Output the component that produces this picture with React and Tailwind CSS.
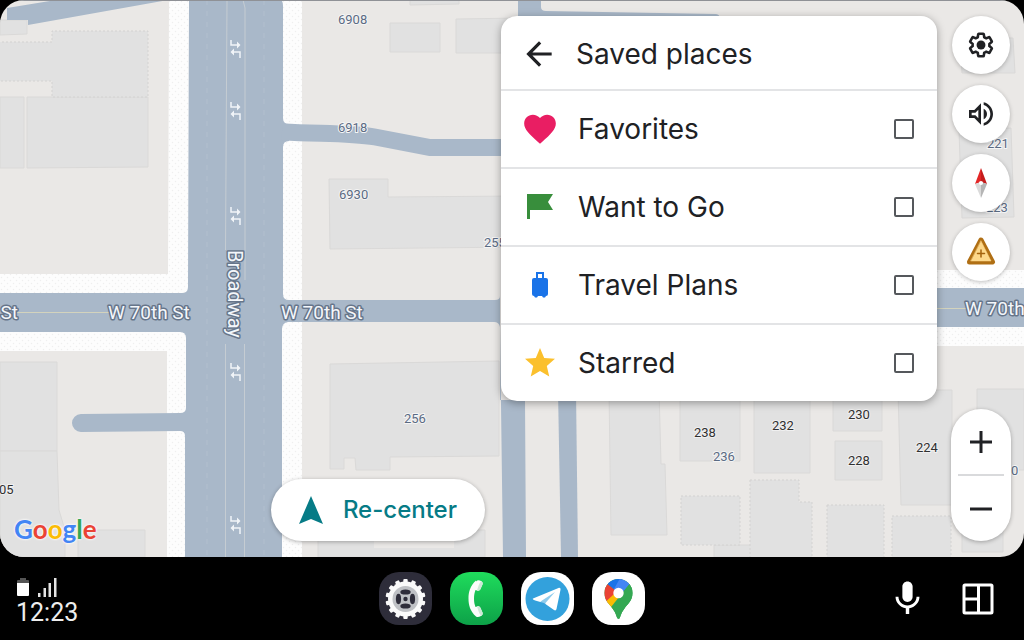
import { MdArrowBack, MdFavorite, MdMic, MdOutlineVolumeUp, MdStar } from 'react-icons/md';

const GEAR =
  'M19.14 12.94c.04-.3.06-.61.06-.94 0-.32-.02-.64-.07-.94l2.03-1.58c.18-.14.23-.41.12-.61l-1.92-3.32c-.12-.22-.37-.29-.59-.22l-2.39.96c-.5-.38-1.03-.7-1.62-.94l-.36-2.54c-.04-.24-.24-.41-.48-.41h-3.84c-.24 0-.43.17-.47.41l-.36 2.54c-.59.24-1.13.57-1.62.94l-2.39-.96c-.22-.08-.47 0-.59.22L2.74 8.87c-.12.21-.08.47.12.61l2.03 1.58c-.05.3-.09.63-.09.94s.02.64.07.94l-2.03 1.58c-.18.14-.23.41-.12.61l1.92 3.32c.12.22.37.29.59.22l2.39-.96c.5.38 1.03.7 1.62.94l.36 2.54c.05.24.24.41.48.41h3.84c.24 0 .44-.17.47-.41l.36-2.54c.59-.24 1.13-.56 1.62-.94l2.39.96c.22.08.47 0 .59-.22l1.92-3.32c.12-.22.07-.47-.12-.61z';

const BUILDINGS = [
  '0,20 27,20 27,34 0,35',
  '0,97 24,97 24,168 0,168',
  '27,97 148,97 148,167 27,168',
  '0,362 57,362 57,451 0,451',
  '0,451 57,451 59,510 65,530 65,557 0,557',
  '78,530 145,530 145,557 78,557',
  '410,0 459,0 459,4 410,5',
  '390,23 440,23 440,52 390,52',
  '456,19 520,18 520,53 456,53',
  '329,179 388,179 388,197 520,196 520,247 330,249',
  '330,364 499,361 499,456 390,457 390,470 356,470 355,458 344,458 344,469 330,469',
  '318,530 485,530 485,557 318,557',
  '609,390 659,390 661,464 665,464 667,535 611,535',
  '680,390 740,390 740,461 680,461',
  '754,390 810,390 810,473 754,473',
  '833,390 882,390 882,431 833,431',
  '835,441 882,441 882,480 835,480',
  '898,390 952,390 952,505 901,505',
  '977,389 1024,389 1024,470 977,470',
  '962,530 1003,530 1003,552 962,552',
  '714,545 762,545 762,557 714,557',
  '960,38 1013,38 1015,73 962,73',
  '959,130 1011,128 1014,217 962,218',
];

const DASHED_BUILDINGS = [
  '-2,42 52,42 52,31 148,31 148,97 52,97 52,81 -2,81',
  '681,496 740,496 740,545 681,545',
  '750,480 799,480 799,502 812,502 812,559 750,559',
  '827,505 884,505 884,559 827,559',
  '892,516 951,516 951,559 892,559',
];

const HOUSE_NUMBERS = [
  { text: '6908', x: 338, y: 24 },
  { text: '6918', x: 338, y: 132 },
  { text: '6930', x: 339, y: 199 },
  { text: '255', x: 484, y: 247 },
  { text: '256', x: 404, y: 423 },
  { text: '236', x: 713, y: 461 },
  { text: '221', x: 987, y: 148 },
  { text: '223', x: 986, y: 212 },
  { text: '0', x: 1011, y: 475 },
];

const PLACE_NUMBERS = [
  { text: '05', x: -1, y: 494 },
  { text: '238', x: 694, y: 437 },
  { text: '232', x: 772, y: 430 },
  { text: '230', x: 848, y: 419 },
  { text: '228', x: 848, y: 465 },
  { text: '224', x: 916, y: 452 },
];

const TURN_ARROWS = [49, 111, 216, 372, 525];

function FlagIcon() {
  return (
    <svg viewBox="0 0 32 32" className="size-8" fill="#388e3c">
      <path d="M3 3h26l-5 8 5 8H6v9H3z" />
    </svg>
  );
}

function LuggageIcon() {
  return (
    <svg viewBox="0 0 32 32" className="size-8" fill="#1a73e8">
      <path
        fillRule="evenodd"
        d="M12 3h8v6h2a2 2 0 0 1 2 2v14a2 2 0 0 1-2 2l-1 1.500h-2L18 27h-4l-1 1.500h-2L10 27a2 2 0 0 1-2-2V11a2 2 0 0 1 2-2h2zM14 5v4h4V5z"
      />
    </svg>
  );
}

const LISTS = [
  { id: 'favorites', label: 'Favorites', icon: <MdFavorite className="size-[38px] text-[#e91e63]" /> },
  { id: 'want-to-go', label: 'Want to Go', icon: <FlagIcon /> },
  { id: 'travel-plans', label: 'Travel Plans', icon: <LuggageIcon /> },
  { id: 'starred', label: 'Starred', icon: <MdStar className="size-9 text-[#fbc02d]" /> },
];

function MapCanvas() {
  return (
    <svg
      viewBox="0 0 1024 557"
      preserveAspectRatio="xMinYMin slice"
      className="absolute inset-0 size-full font-[Roboto,sans-serif]"
      aria-hidden="true"
    >
      <defs>
        <pattern id="sidewalk" width="6" height="6" patternUnits="userSpaceOnUse">
          <rect width="6" height="6" fill="#fdfdfd" />
          <circle cx="1.500" cy="1.500" r="0.700" fill="#efefef" />
          <circle cx="4.500" cy="4.500" r="0.700" fill="#efefef" />
        </pattern>
      </defs>
      <rect width="1024" height="557" fill="#eae8e6" />

      <g fill="#e1e1e1" stroke="#dad9d8" strokeWidth="1">
        {BUILDINGS.map((points) => (
          <polygon key={points} points={points} />
        ))}
      </g>
      <g fill="#e1e1e1" stroke="#d3d2d1" strokeWidth="1" strokeDasharray="2 2">
        {DASHED_BUILDINGS.map((points) => (
          <polygon key={points} points={points} />
        ))}
      </g>
      <rect x="374" y="530" width="80" height="18" fill="#eae8e6" />

      {/* Sidewalks */}
      <g fill="url(#sidewalk)">
        <path d="M169 0h24v340H0v-66h168z" />
        <path d="M0 320h190v237h-23V351H0z" />
        <path d="M278 0h24v557h-24z" />
        <path d="M930 270h94v76h-94z" />
      </g>

      {/* Streets */}
      <g fill="#a9b8c9">
        <path d="M7 8L56 0H168L28 25V20H7z" />
        <path d="M189 0H280Q283 0 283 6V118Q283 124 289 124V141Q283 141 283 147V294Q283 300 289 300H495Q500 300 500 296V400H525L526 557H503L500 327Q499 322 494 322H288Q282 323 282 329V557H185V436Q185 431 180 431L81 432A9 9 0 0 1 81 414L180 413Q186 413 186 408V338Q186 332 180 332H0V293H182Q188 293 188 287z" />
        <path d="M518 0h23v7q0 4 5 4l170 3q4 0 4 6H518z" />
        <path d="M558 390h18l2 167h-17z" />
        <path d="M520 288h504v39H520z" />
      </g>
      <path d="M282 132C330 134 352 133 375 137L430 147.500H503" fill="none" stroke="#a9b8c9" strokeWidth="17" />

      {/* Lane markings */}
      <g fill="none" stroke="#c5ccd2" strokeWidth="1">
        <path d="M227 0L225.500 250M225.500 344V557M243 0L245 8V280M244.500 344V557" />
        <path d="M207 0V557M264 0V557" stroke="#b2bfce" strokeDasharray="5 6" />
        <path d="M17 312.500H109M937 308.500H967" stroke="#d3d3bd" />
      </g>
      <g fill="none" stroke="#f1f4f8" strokeWidth="1.500">
        {TURN_ARROWS.map((y) => (
          <g key={y} transform={`translate(235 ${y})`}>
            <path d="M-4 -9V-4H3M5 9V3H-2" />
            <path d="M2 -7.500L5.500 -4L2 -0.500zM-1 -0.500L-4.500 3L-1 6.500z" fill="#f1f4f8" stroke="none" />
          </g>
        ))}
      </g>
      <path d="M0 0.500H1024" stroke="#8f9196" strokeWidth="1" />

      {/* Labels */}
      <g fontSize="13" fill="#5b6b83" stroke="#f5f5f5" strokeWidth="2" paintOrder="stroke">
        {HOUSE_NUMBERS.map(({ text, x, y }) => (
          <text key={text} x={x} y={y}>{text}</text>
        ))}
      </g>
      <g fontSize="13" fill="#303030" stroke="#f0f0f0" strokeWidth="2" paintOrder="stroke">
        {PLACE_NUMBERS.map(({ text, x, y }) => (
          <text key={text} x={x} y={y}>{text}</text>
        ))}
      </g>
      <g fontSize="19" fill="#f4f7fb" stroke="#66758a" strokeWidth="3" strokeLinejoin="round" paintOrder="stroke">
        <text x="18" y="319" textAnchor="end">St</text>
        <text x="108" y="319">W 70th St</text>
        <text x="281" y="319">W 70th St</text>
        <text x="965" y="315">W 70th</text>
        <text fontSize="20" transform="translate(228 250) rotate(90)">Broadway</text>
      </g>
    </svg>
  );
}

function GoogleLogo() {
  return (
    <div className="font-[Lato,sans-serif] text-[26px] leading-6 font-bold [text-shadow:0_0_2px_#fff,0_0_3px_#fff]">
      <span className="text-[#4285f4]">G</span>
      <span className="text-[#ea4335]">o</span>
      <span className="text-[#fbbc05]">o</span>
      <span className="text-[#4285f4]">g</span>
      <span className="text-[#34a853]">l</span>
      <span className="text-[#ea4335]">e</span>
    </div>
  );
}

function SavedPlaces() {
  return (
    <section className="w-[436px] shrink-0 self-start overflow-hidden rounded-[16px] bg-white text-[#202124] shadow-[0_2px_8px_rgba(0,0,0,0.35)]">
      <header className="flex h-[73px] items-center gap-[18px] pt-[2px] pl-[19px] pr-6">
        <button type="button" aria-label="Back">
          <MdArrowBack className="size-[38px]" />
        </button>
        <h1 className="text-[28px] leading-9">Saved places</h1>
      </header>
      {LISTS.map(({ id, label, icon }) => (
        <label
          key={id}
          htmlFor={id}
          className="flex h-[78px] items-center border-t-2 border-[#e3e4e6] px-[23px]"
        >
          <span className="flex w-8 shrink-0 items-center justify-center [&>svg]:shrink-0">{icon}</span>
          <span className="ml-[22px] flex-1 text-[28px] leading-9">{label}</span>
          <input
            id={id}
            type="checkbox"
            className="size-5 appearance-none rounded-[2px] border-2 border-[#55585c] checked:bg-[#067b86]"
          />
        </label>
      ))}
    </section>
  );
}

function RoundButton({ label, children }) {
  return (
    <button
      type="button"
      aria-label={label}
      className="flex size-[58px] items-center justify-center rounded-full bg-white text-[#202124] shadow-[0_1px_4px_rgba(0,0,0,0.25)]"
    >
      {children}
    </button>
  );
}

function MapControls() {
  return (
    <div className="flex w-[60px] shrink-0 flex-col items-center justify-between">
      <div className="flex flex-col gap-[11px]">
        <RoundButton label="Settings">
          <svg viewBox="0 0 24 24" className="size-[28px]" fill="none" stroke="currentColor" strokeWidth="2.200" strokeLinejoin="round">
            <path d={GEAR} />
            <circle cx="12" cy="12" r="3.800" fill="currentColor" stroke="none" />
          </svg>
        </RoundButton>
        <RoundButton label="Sound">
          <MdOutlineVolumeUp className="size-8" />
        </RoundButton>
        <RoundButton label="Compass">
          <svg viewBox="0 0 12 30" className="h-[30px] w-3">
            <path d="M6 0L0 16L6 14z" fill="#e32626" />
            <path d="M6 0L12 16L6 14z" fill="#c41c1c" />
            <path d="M0 16L6 14V30z" fill="#dadada" />
            <path d="M12 16L6 14V30z" fill="#b5b5b5" />
            <circle cx="6" cy="15" r="2" fill="#fff" />
          </svg>
        </RoundButton>
        <RoundButton label="Report">
          <svg viewBox="0 0 32 32" className="size-8" strokeLinejoin="round" strokeLinecap="round">
            <path d="M16 4L27.500 26H4.500z" fill="#fdd88a" stroke="#b06f14" strokeWidth="5" />
            <path d="M16 5L26 25H6z" fill="#fdd88a" stroke="#fdd88a" strokeWidth="0.500" />
            <path d="M16 14v7M12.500 17.500h7" stroke="#a3620d" strokeWidth="1.500" />
          </svg>
        </RoundButton>
      </div>
      <div className="flex w-full flex-col items-center rounded-full bg-white text-[#202124] shadow-[0_1px_4px_rgba(0,0,0,0.3)]">
        <button type="button" aria-label="Zoom in" className="flex h-[65px] w-full items-center justify-center">
          <svg viewBox="0 0 22 22" className="size-[22px]" stroke="currentColor" strokeWidth="3">
            <path d="M0 11H22M11 0V22" />
          </svg>
        </button>
        <div className="h-[2px] w-[46px] bg-[#d9dadc]" />
        <button type="button" aria-label="Zoom out" className="flex h-[65px] w-full items-center justify-center">
          <svg viewBox="0 0 22 22" className="size-[22px]" stroke="currentColor" strokeWidth="3">
            <path d="M0 11H22" />
          </svg>
        </button>
      </div>
    </div>
  );
}

function SettingsApp() {
  const teeth = Array.from({ length: 14 }, (_, i) => (i * 360) / 14);
  return (
    <svg viewBox="0 0 53 53" className="size-full">
      <rect width="53" height="53" rx="20" fill="#2e2d3a" />
      <g fill="#fafafa">
        <circle cx="26.500" cy="27" r="17.500" />
        {teeth.map((angle) => (
          <rect key={angle} x="24.300" y="7" width="4.400" height="5" rx="1" transform={`rotate(${angle} 26.500 27)`} />
        ))}
      </g>
      <circle cx="26.500" cy="27" r="13" fill="#bfc1c5" />
      <g fill="#2e2d3a">
        {[0, 90, 180, 270].map((angle) => (
          <ellipse key={angle} cx="26.500" cy="20" rx="5.200" ry="2.600" transform={`rotate(${angle} 26.500 27)`} />
        ))}
        <circle cx="26.500" cy="27" r="2.200" />
      </g>
    </svg>
  );
}

function PhoneApp() {
  return (
    <svg viewBox="0 0 53 53" className="size-full">
      <defs>
        <linearGradient id="phone-bg" x2="0" y2="1">
          <stop offset="0" stopColor="#1fdc5c" />
          <stop offset="1" stopColor="#0da148" />
        </linearGradient>
      </defs>
      <rect width="53" height="53" rx="20" fill="url(#phone-bg)" />
      <path
        d="M26 8.500C20 14 18.500 20 18.500 26.500S20 39 26 44.500c1.500 1 3 .500 5-.5 1.500-1 2-2 1.500-3.500l-2-4.500c-.5-1.500-2-2-3.500-1.500l-1.500.5c-1-2.500-1.500-5-1.500-8.500s.5-6 1.500-8.500l1.500.500c1.500.500 3 0 3.500-1.500l2-4.500c.5-1.500 0-2.500-1.500-3.500-2-1-3.500-1-5 .500z"
        fill="#fbfdfb"
      />
      <path d="M27 18.500c1.500.5 3 0 3.500-1.500l2-4.500c.5-1.500 0-2.500-1.500-3.500-2 3-3 6-4 9.500zM27 34.500c1.500-.5 3 0 3.500 1.500l2 4.500c.5 1.500 0 2.500-1.500 3.500-2-3-3-6-4-9.500z" fill="#cfe9d8" />
    </svg>
  );
}

function TelegramApp() {
  return (
    <svg viewBox="0 0 53 53" className="size-full">
      <rect width="53" height="53" rx="20" fill="#fff" />
      <circle cx="26.500" cy="27" r="22" fill="#33a1dc" />
      <path d="M12 26.500L37.500 16c1.500-.5 2.300.3 2 1.800L35.500 37c-.3 1.400-1.300 1.800-2.500 1L23 31l-8-2.300c-1.800-.5-4-1.500-3-2.200z" fill="#fff" />
      <path d="M19.500 29.500L34 20 24.500 31l-1 5z" fill="#33a1dc" opacity="0.550" />
    </svg>
  );
}

function MapsApp() {
  return (
    <svg viewBox="0 0 53 53" className="size-full">
      <defs>
        <clipPath id="pin">
          <path d="M26.500 7a14 14 0 0 1 14 14c0 8-5 11-8 15.500-3 4-3.500 6-4.500 9-.6 1.800-2.400 1.800-3 0-1-3-1.500-5-4.500-9-3-4.500-8-7.500-8-15.500a14 14 0 0 1 14-14z" />
        </clipPath>
      </defs>
      <rect width="53" height="53" rx="20" fill="#fff" />
      <g clipPath="url(#pin)">
        <rect width="53" height="53" fill="#34a853" />
        <path d="M0 0H32L26.500 21L15 12z" fill="#1a73e8" />
        <path d="M14 11L26.500 21L12 34L0 20z" fill="#ea4335" />
        <path d="M31.500 0H53L37 13L26.500 25L22 17z" fill="#4285f4" />
        <path d="M26.500 18L10 33L19 38L36 24z" fill="#fbbc04" />
        <path d="M39 10L17.500 37L28 50L53 30z" fill="#34a853" />
      </g>
      <circle cx="26.500" cy="21" r="5.200" fill="#fff" />
    </svg>
  );
}

const APPS = [
  { name: 'Settings', icon: <SettingsApp /> },
  { name: 'Phone', icon: <PhoneApp /> },
  { name: 'Telegram', icon: <TelegramApp /> },
  { name: 'Maps', icon: <MapsApp /> },
];

function Dock() {
  return (
    <footer className="grid h-[83px] shrink-0 grid-cols-[1fr_auto_1fr] items-center text-white">
      <div className="flex flex-col pt-2 pl-4 text-[#eeeeee]">
        <div className="flex items-end gap-2">
          <svg viewBox="0 0 14 20" className="h-5 w-[14px]">
            <path d="M4 1h6v2h2a1 1 0 0 1 1 1v4H1V4a1 1 0 0 1 1-1h2z" fill="#555" />
            <path d="M1 6h12v12a1 1 0 0 1-1 1H2a1 1 0 0 1-1-1z" fill="#fff" />
          </svg>
          <svg viewBox="0 0 20 20" className="size-5" fill="#e4e4e4">
            <path d="M0 16h2.500v4H0zM5.500 11H8v9H5.500zM10.500 6H13v14h-2.500zM16 1h2.500v19H16z" />
          </svg>
        </div>
        <span className="font-[Roboto,sans-serif] text-[25px] leading-8">12:23</span>
      </div>
      <nav className="flex gap-[18px]">
        {APPS.map(({ name, icon }) => (
          <button key={name} type="button" aria-label={name} className="size-[53px]">
            {icon}
          </button>
        ))}
      </nav>
      <div className="flex items-center justify-end gap-[34px] pr-[30px]">
        <button type="button" aria-label="Voice search">
          <MdMic className="size-[41px]" />
        </button>
        <button type="button" aria-label="Split screen">
          <svg viewBox="0 0 32 32" className="size-8" fill="none" stroke="currentColor" strokeWidth="3">
            <rect x="2" y="2" width="28" height="28" rx="1" />
            <path d="M16.500 2V30M2 16H16.500" />
          </svg>
        </button>
      </div>
    </footer>
  );
}

export default function App() {
  return (
    <div className="flex h-screen flex-col bg-black font-[Inter,sans-serif]">
      <main className="relative min-h-0 flex-1 overflow-hidden rounded-[24px]">
        <MapCanvas />
        <div className="relative flex h-full pt-4 pr-[13px] pb-4">
          <div className="flex flex-1 items-end justify-between pl-[14px] pr-4">
            <GoogleLogo />
            <button
              type="button"
              className="flex h-[62px] items-center gap-5 rounded-full bg-white px-7 text-[24px] font-medium text-[#067b86] shadow-[0_1px_4px_rgba(0,0,0,0.3)]"
            >
              <svg viewBox="0 0 24 28" className="h-7 w-6" fill="currentColor">
                <path d="M12 0L24 28L12 23L0 28z" />
              </svg>
              Re-center
            </button>
          </div>
          <div className="flex gap-[14px]">
            <SavedPlaces />
            <MapControls />
          </div>
        </div>
      </main>
      <Dock />
    </div>
  );
}
